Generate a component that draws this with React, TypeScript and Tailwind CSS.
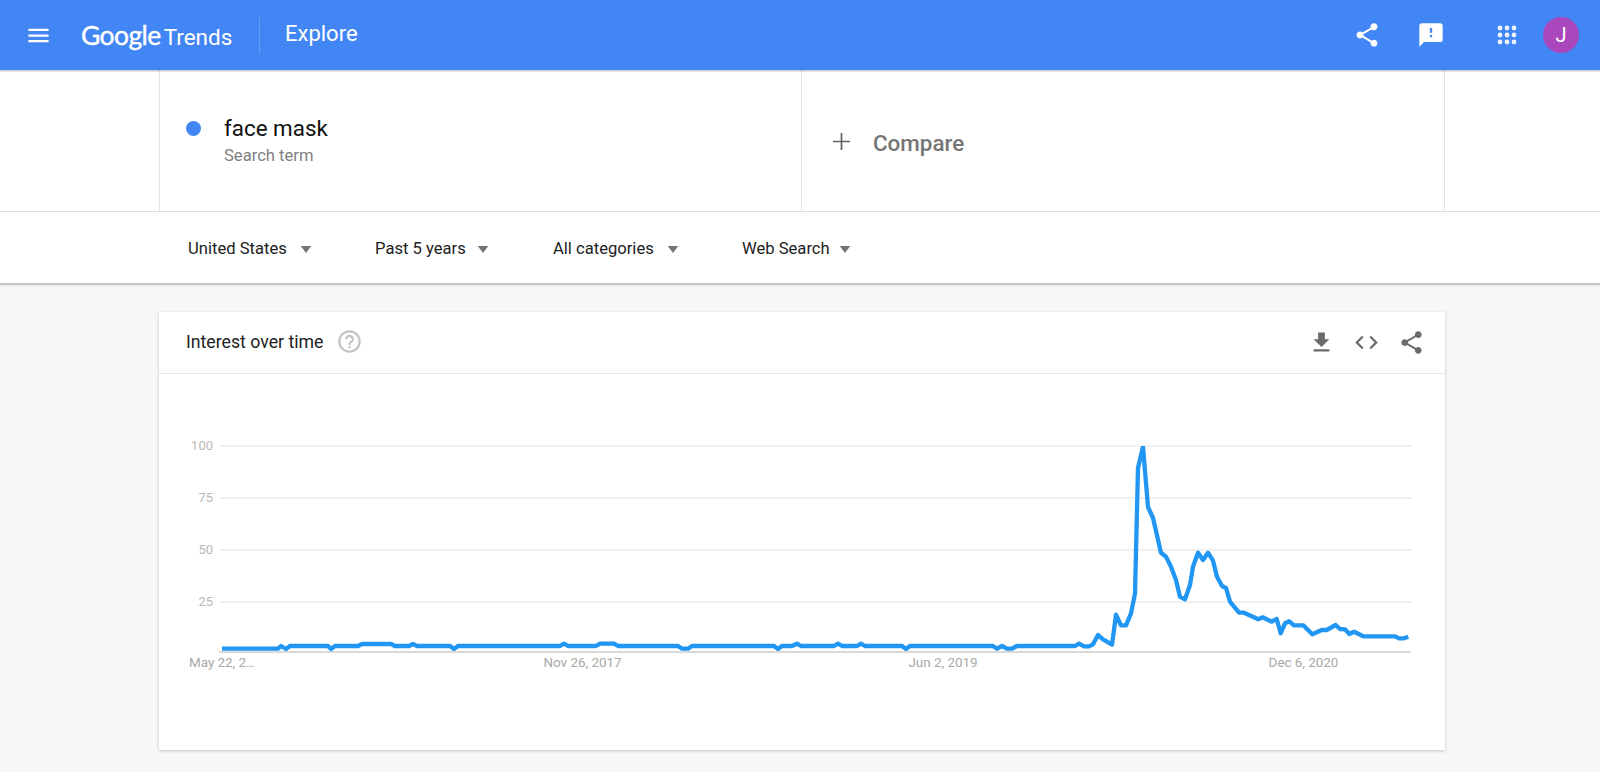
const SHARE = "M18 16.08c-.76 0-1.44.3-1.96.77L8.91 12.7c.05-.23.09-.46.09-.7s-.04-.47-.09-.7l7.05-4.11c.54.5 1.25.81 2.04.81 1.66 0 3-1.34 3-3s-1.34-3-3-3-3 1.34-3 3c0 .24.04.47.09.7L8.04 9.81C7.5 9.31 6.79 9 6 9c-1.66 0-3 1.34-3 3s1.34 3 3 3c.79 0 1.5-.31 2.04-.81l7.12 4.16c-.05.21-.08.43-.08.65 0 1.61 1.31 2.92 2.92 2.92 1.61 0 2.92-1.31 2.92-2.92s-1.31-2.92-2.92-2.92z";

function Icon({ d, className }: { d: string; className: string }) {
  return (
    <svg viewBox="0 0 24 24" className={className} fill="currentColor">
      <path d={d} />
    </svg>
  );
}

function Filter({ label, className }: { label: string; className: string }) {
  return (
    <div className={`flex items-center ${className}`}>
      <span className="text-[16.6px] leading-none text-[#212121]">{label}</span>
      <svg viewBox="0 0 12 8" className="w-[12px] h-[7px] text-[#757575]" fill="currentColor">
        <path d="M0 0h12L6 8z" />
      </svg>
    </div>
  );
}

const LINE: [number, number][] = [
  [222, 648.7], [278, 648.7], [281, 646], [286, 649], [290, 646], [328, 646], [331, 649], [335, 646], [358, 646], [362, 644], [391, 644], [395, 646], [409, 646], [413, 644], [417, 646],
  [450, 646], [454, 649], [458, 646], [560, 646], [564, 643.7], [568, 646], [596, 646], [600, 643.7], [614, 643.7], [618, 646],
  [678, 646], [682, 648.7], [688, 648.7], [692, 646], [774, 646], [778, 649], [782, 646], [792, 646], [797, 643.7], [801, 646],
  [834, 646], [838, 643.7], [842, 646], [857, 646], [861, 643.7], [865, 646], [902, 646], [906, 649], [910, 646],
  [993, 646], [997, 648.7], [1002, 646], [1007, 648.7], [1012, 648.7], [1017, 646], [1075, 646], [1079, 643.7], [1084, 646.3], [1089, 646.3], [1093, 644.3],
  [1098, 635], [1103, 639.3], [1112, 644.7], [1116, 614.7], [1121, 625.3], [1126, 625.3], [1131, 613.3], [1135, 593.3], [1138, 468], [1143, 446.7], [1148, 507], [1153, 518],
  [1161, 552.7], [1166, 556.7], [1171, 566.7], [1176, 580], [1180, 596.7], [1185, 599.3], [1190, 585], [1193, 566.7], [1198, 552.7], [1203, 560], [1208, 552.7], [1213, 560.7],
  [1217, 576.7], [1222, 586], [1226, 588], [1230, 601.7], [1239, 612.7], [1244, 612.7], [1258.3, 619.3], [1262.7, 617.3], [1271.7, 621.7], [1276.7, 619], [1280.7, 633.3],
  [1285, 623.3], [1289.3, 621.3], [1294, 625.3], [1303.3, 625.3], [1312.3, 634.3], [1321.7, 630], [1326.7, 630], [1335.7, 625], [1340, 629], [1345, 629.3], [1349.3, 634],
  [1354, 631.7], [1363.3, 636.3], [1395, 636.3], [1399, 638.3], [1404, 638.3], [1408.3, 636.7],
];

const GRID: [number, string][] = [[446, "100"], [498, "75"], [550, "50"], [602, "25"]];
const DATES: [number, string, "start" | "middle"][] = [
  [189, "May 22, 2…", "start"],
  [582.5, "Nov 26, 2017", "middle"],
  [943, "Jun 2, 2019", "middle"],
  [1303.5, "Dec 6, 2020", "middle"],
];

function Chart() {
  return (
    <svg viewBox="159 374 1286 376" className="block w-[1286px] h-[376px]">
      <defs>
        <clipPath id="plot">
          <rect x="219" y="446" width="1192" height="206" />
        </clipPath>
      </defs>
      {GRID.map(([y, label]) => (
        <g key={label}>
          <line x1="219" x2="1411" y1={y} y2={y} stroke="#e0e0e0" strokeWidth="1" />
          <text x="213" y={y + 4} textAnchor="end" fontSize="13" fill="#b8b8b8">{label}</text>
        </g>
      ))}
      <line x1="219" x2="1411" y1="652" y2="652" stroke="#b4b4b4" strokeWidth="1" />
      {DATES.map(([x, label, anchor]) => (
        <text key={label} x={x} y="667" textAnchor={anchor} fontSize="13.4" fill="#a8a8a8">{label}</text>
      ))}
      <polyline
        clipPath="url(#plot)"
        points={LINE.map((p) => p.join(",")).join(" ")}
        fill="none"
        stroke="#2196f3"
        strokeWidth="4.3"
        strokeLinejoin="round"
      />
    </svg>
  );
}

export default function App() {
  return (
    <div className="min-h-[772px] bg-[#f7f7f7] font-['Roboto',sans-serif]">
      <header className="relative z-10 h-[70px] bg-[#4285f4] text-white flex items-center shadow-[0_1px_2px_rgba(0,0,0,0.3)]">
        <Icon className="w-[27px] h-[27px] ml-[25px]" d="M3 18h18v-2H3v2zm0-5h18v-2H3v2zm0-7v2h18V6H3z" />
        <div className="ml-[29px] flex items-baseline w-[152px]">
          <span className="font-['Lato',sans-serif] text-[26.5px] leading-none tracking-[-0.6px] [-webkit-text-stroke:0.4px_white]">Google</span>
          <span className="ml-[3px] text-[22.5px] leading-none">Trends</span>
        </div>
        <div className="ml-[26px] w-px h-[37px] bg-white/20" />
        <span className="ml-[25px] text-[22px] leading-none -mt-[3px]">Explore</span>
        <div className="ml-auto flex items-center">
          <Icon className="w-[28px] h-[28px]" d={SHARE} />
          <Icon className="w-[28px] h-[28px] ml-[36px]" d="M20 2H4c-1.1 0-1.99.9-1.99 2L2 22l4-4h14c1.1 0 2-.9 2-2V4c0-1.1-.9-2-2-2zm-7 12h-2v-2h2v2zm0-4h-2V6h2v4z" />
          <svg viewBox="0 0 20 20" className="w-[20px] h-[20px] ml-[52px] opacity-90" fill="currentColor">
            {[3, 10, 17].map((y) =>
              [3, 10, 17].map((x) => <circle key={`${x}-${y}`} cx={x} cy={y} r="2.4" />)
            )}
          </svg>
          <div className="ml-[26px] mr-[21px] w-[36px] h-[36px] rounded-full bg-[#ab47bc] flex items-center justify-center text-[20px]">J</div>
        </div>
      </header>

      <div className="bg-white border-b border-[#e0e0e0] h-[142px] pl-[159px] pr-[155px]">
        <div className="h-full flex border-x border-[#e5e5e5]">
          <div className="w-[642px] border-r border-[#e5e5e5] flex items-start pl-[26px] pt-[41px]">
            <div className="w-[15px] h-[15px] rounded-full bg-[#4285f4] mt-[10px]" />
            <div className="ml-[23px]">
              <div className="text-[22.4px] leading-[34px] text-[#111111]">face mask</div>
              <div className="text-[16.6px] leading-[18px] text-[#808080] mt-[2px]">Search term</div>
            </div>
          </div>
          <div className="flex-1 flex items-center pl-[31px] pt-[6px]">
            <svg viewBox="0 0 18 18" className="w-[17px] h-[17px] -mt-[4px] text-[#616161]" fill="currentColor">
              <path d="M8.1 0h1.8v8.1H18v1.8H9.9V18H8.1V9.9H0V8.1h8.1z" />
            </svg>
            <span className="ml-[23px] text-[22.4px] leading-none font-medium text-[#757575]">Compare</span>
          </div>
        </div>
      </div>

      <div className="bg-white h-[73px] border-b-2 border-[#c4c4c4] pl-[188px] pt-[3px] flex items-center shadow-[0_1px_2px_rgba(0,0,0,0.08)]">
        <Filter label="United States" className="w-[187px] gap-[13px]" />
        <Filter label="Past 5 years" className="w-[178px] gap-[11px]" />
        <Filter label="All categories" className="w-[189px] gap-[13px]" />
        <Filter label="Web Search" className="gap-[9px]" />
      </div>

      <div className="pl-[159px] pr-[155px] pt-[27px]">
        <div className="bg-white shadow-[0_1px_3px_rgba(0,0,0,0.22)]">
          <div className="h-[62px] border-b border-[#e5e5e5] flex items-center pl-[27px]">
            <span className="text-[17.7px] leading-none text-[#212121]">Interest over time</span>
            <Icon className="w-[27px] h-[27px] ml-[13px] -mt-[2px] text-[#c4c4c4]" d="M11 18h2v-2h-2v2zm1-16C6.48 2 2 6.48 2 12s4.48 10 10 10 10-4.48 10-10S17.52 2 12 2zm0 18c-4.41 0-8-3.59-8-8s3.59-8 8-8 8 3.59 8 8-3.59 8-8 8zm0-14c-2.21 0-4 1.79-4 4h2c0-1.1.9-2 2-2s2 .9 2 2c0 2-3 1.75-3 5h2c0-2.25 3-2.5 3-5 0-2.21-1.79-4-4-4z" />
            <div className="ml-auto mr-[20px] flex items-center gap-[18px] text-[#6b6b6b]">
              <Icon className="w-[27px] h-[27px]" d="M19 9h-4V3H9v6H5l7 7 7-7zM5 18v2h14v-2H5z" />
              <Icon className="w-[27px] h-[27px]" d="M9.4 16.6L4.8 12l4.6-4.6L8 6l-6 6 6 6 1.4-1.4zm5.2 0l4.6-4.6-4.6-4.6L16 6l6 6-6 6-1.4-1.4z" />
              <Icon className="w-[27px] h-[27px]" d={SHARE} />
            </div>
          </div>
          <Chart />
        </div>
      </div>
    </div>
  );
}
